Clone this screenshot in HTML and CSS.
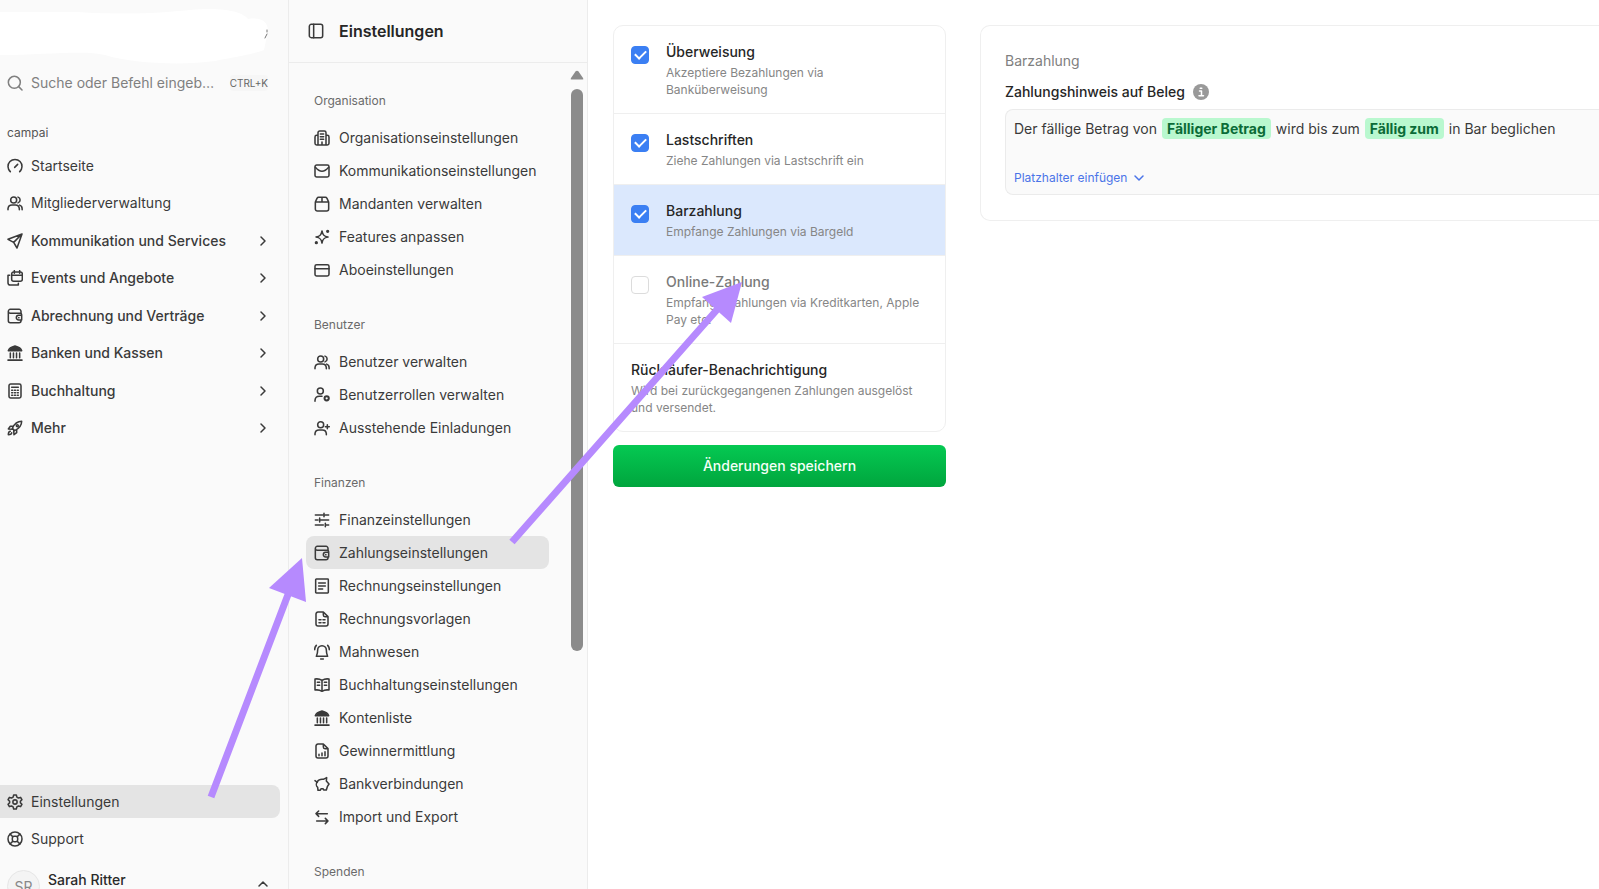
FILE: index.html
```html
<!DOCTYPE html>
<html lang="de">
<head>
<meta charset="utf-8">
<title>Zahlungseinstellungen</title>
<link rel="stylesheet" href="styles.css">
</head>
<body>
<svg class="sprite" aria-hidden="true">
  <symbol id="search" viewBox="0 0 24 24"><circle cx="11" cy="11" r="9"/><path d="M17.500 17.500L22.500 22.500"/></symbol>
  <symbol id="gauge" viewBox="0 0 24 24"><path d="M5 20.500a10.500 10.500 0 1 1 14 0M5 20.500L3.500 19M19 20.500l1.500-1.500M11.500 14L16 9.500"/></symbol>
  <symbol id="users" viewBox="0 0 24 24"><circle cx="10" cy="7.500" r="4.500"/><path d="M1.500 22v-1.500a6 6 0 0 1 6-5.500h5a6 6 0 0 1 6 5.500V22M16.500 3.200a4.500 4.500 0 0 1 0 8.600M19 15.200c2.300.8 3.700 2.800 3.700 5.300V22"/></symbol>
  <symbol id="send" viewBox="0 0 24 24"><path d="M22.500 1.500L1.500 9.500l8.500 4.500 5 8.500zM22.500 1.500L10 14"/></symbol>
  <symbol id="events" viewBox="0 0 24 24"><rect x="7" y="3" width="16" height="14" rx="3"/><path d="M7 8h16M11 1v4M19 1v4M4 8H1.500v11a3.500 3.500 0 0 0 3.500 3.500h12V20"/></symbol>
  <symbol id="wallet" viewBox="0 0 24 24"><path d="M21 8V5a3 3 0 0 0-3-3H5a3 3 0 0 0-3 3v14a3 3 0 0 0 3 3h13a3 3 0 0 0 3-3v-1M2 5c0 2 1 3 3 3h15a2 2 0 0 1 2 2v8h-4.500a3.500 3.500 0 0 1 0-7H22M17.500 14.500h.5"/></symbol>
  <symbol id="bank" viewBox="0 0 24 24"><path d="M2 8.500C3 5 8 2.500 12 1.500c4 1 9 3.500 10 7zM5 12v7M9.700 12v7M14.300 12v7M19 12v7M1.500 22.700h21"/><path class="fill" d="M4 8c1-3 5-4.500 8-5.500 3 1 7 2.500 8 5.500z"/></symbol>
  <symbol id="calc" viewBox="0 0 24 24"><rect x="3" y="1.500" width="18" height="21" rx="2.500"/><path d="M7 6.500h10M7 11h1.500M11.200 11h1.600M15.500 11H17M7 14.700h1.500M11.200 14.700h1.600M15.500 14.700H17M7 18.400h1.500M11.200 18.400h1.600M15.500 18.400H17"/></symbol>
  <symbol id="rocket" viewBox="0 0 24 24"><path d="M8 12.500C11 6 15 2 22 2c0 7-4 11-10.500 14zM9.500 9.500H5L2 13.500l6 .5M14.500 14.500V19l-4 3-.5-6M5 17c-2 0-3 2-3 5 3 0 5-1 5-3"/><circle cx="15.500" cy="8.500" r="1.500"/></symbol>
  <symbol id="gear" viewBox="0 0 24 24"><path d="M10 1.500h4l.8 3.200 2.400 1.300 3.200-.9 2 3.400-2.300 2.300v2.400l2.300 2.300-2 3.400-3.200-.9-2.400 1.300-.8 3.200h-4l-.8-3.200L6.800 18l-3.200.9-2-3.400 2.300-2.300v-2.400L1.600 8.500l2-3.400 3.200.9 2.400-1.300z"/><circle cx="12" cy="12" r="3.200"/></symbol>
  <symbol id="support" viewBox="0 0 24 24"><circle cx="12" cy="12" r="10.500"/><rect x="8" y="8" width="8" height="8" rx="2.500"/><path d="M4.700 4.700l4 4M19.300 4.700l-4 4M4.700 19.300l4-4M19.300 19.300l-4-4"/></symbol>
  <symbol id="right" viewBox="0 0 24 24"><path d="M8 4l8 8-8 8"/></symbol>
  <symbol id="up" viewBox="0 0 24 24"><path d="M4 16l8-8 8 8"/></symbol>
  <symbol id="down" viewBox="0 0 24 24"><path d="M4 8l8 8 8-8"/></symbol>
  <symbol id="panel" viewBox="0 0 24 24"><rect x="2" y="2" width="20" height="20" rx="3"/><path d="M8.500 2v20"/></symbol>
  <symbol id="building" viewBox="0 0 24 24"><path d="M6 22.500V4a2.500 2.500 0 0 1 2.500-2.500h7A2.500 2.500 0 0 1 18 4v18.500zM6 8H4a2.500 2.500 0 0 0-2.500 2.500V20A2.500 2.500 0 0 0 4 22.500h16a2.500 2.500 0 0 0 2.500-2.500v-9.500A2.500 2.500 0 0 0 20 8h-2M9.500 6h5M9.500 10h5M9.500 14h5M12 18v4"/></symbol>
  <symbol id="mail" viewBox="0 0 24 24"><rect x="1.500" y="3" width="21" height="18" rx="2.500"/><path d="M2 6.500c3 3.500 7 6 10 6s7-2.500 10-6"/></symbol>
  <symbol id="box" viewBox="0 0 24 24"><path d="M2 9h20v10.500a3 3 0 0 1-3 3H5a3 3 0 0 1-3-3zM2 9l2.500-5.500A3 3 0 0 1 7 2h10a3 3 0 0 1 2.500 1.500L22 9M12 2v7"/></symbol>
  <symbol id="sparkle" viewBox="0 0 24 24"><path d="M12 3c1 6 3 8 9 9-6 1-8 3-9 9-1-6-3-8-9-9 6-1 8-3 9-9z"/><circle class="fill" cx="20.500" cy="3.500" r="1.300"/><circle class="fill" cx="3.500" cy="20.500" r="1.300"/></symbol>
  <symbol id="card" viewBox="0 0 24 24"><rect x="1.500" y="4" width="21" height="17" rx="2.500"/><path d="M1.500 10h21"/></symbol>
  <symbol id="userdot" viewBox="0 0 24 24"><circle cx="9.500" cy="6" r="4.500"/><path d="M1.500 21.500V20a6.500 6.500 0 0 1 6.500-6h4"/><circle class="bold" cx="19" cy="17" r="3.200"/></symbol>
  <symbol id="userplus" viewBox="0 0 24 24"><circle cx="10" cy="7" r="4.500"/><path d="M1.500 22v-1.500a6 6 0 0 1 6-5.500h5a6 6 0 0 1 6 5.500V22M20 7v6M17 10h6"/></symbol>
  <symbol id="sliders" viewBox="0 0 24 24"><path d="M2 4.500h11M17 4.500h5M15 2v5M2 12h4M9 12h13M8.500 9v6M2 19.500h12M18 19.500h4M17 17v5"/></symbol>
  <symbol id="invoice" viewBox="0 0 24 24"><rect x="2.500" y="1.500" width="19" height="21" rx="1"/><path d="M7 7.500h10M7 12h10M7 16.500h6"/></symbol>
  <symbol id="doc" viewBox="0 0 24 24"><path d="M14 1.500H6a3 3 0 0 0-3 3v15a3 3 0 0 0 3 3h12a3 3 0 0 0 3-3v-11zM14 1.500V6a2.500 2.500 0 0 0 2.500 2.500H21M7.500 13h3M13.500 13h3M7.500 17.500h3M13.500 17.500h3"/></symbol>
  <symbol id="bell" viewBox="0 0 24 24"><path d="M12 2.500c-4 0-6.500 3-6.500 6.500 0 5-1 7-2 9.500h17c-1-2.500-2-4.500-2-9.500 0-3.500-2.500-6.500-6.500-6.500zM10 22.500h4M3.500 2C2 3.500 1 6 1 8.500M20.500 2C22 3.500 23 6 23 8.500"/></symbol>
  <symbol id="book" viewBox="0 0 24 24"><path d="M12 5C9 3 5 2.500 1.500 3v16.500c3.500-.5 7.500 0 10.500 2 3-2 7-2.500 10.500-2V3C19 2.500 15 3 12 5zM12 5v16.500M5 8h3.500M5 12.500h3.500M15.500 8H19M15.500 12.500H19"/></symbol>
  <symbol id="report" viewBox="0 0 24 24"><path d="M14 1.500H6a3 3 0 0 0-3 3v15a3 3 0 0 0 3 3h12a3 3 0 0 0 3-3v-11zM14 1.500V6a2.500 2.500 0 0 0 2.500 2.500H21M7.500 19v-2M12 19v-4M16.500 19v-6"/></symbol>
  <symbol id="piggy" viewBox="0 0 24 24"><path d="M5 8.500C6.500 6 9 5 12 5h2l5-2.500-.5 5L22.500 12l-2.500 4-1.500 5h-4l-1-2h-3l-1 2.500H6L5.500 17C3 15 3 11 5 8.500zM5 9.500L1.500 7"/></symbol>
  <symbol id="swap" viewBox="0 0 24 24"><path d="M20 7H3M7 3L3 7l4 4M4 18h17M17 14l4 4-4 4"/></symbol>
</svg>

<div class="app">
  <aside class="sidebar">
    <div class="brand">
      <svg class="brand-mask" viewBox="0 0 289 66" aria-hidden="true">
        <path d="M0 12H75C130 15 160 13 190 10C225 7 242 12 248 19C262 17 268 22 268 31L264 50C250 55 235 57 215 61C180 66 130 63 105 55C85 50 45 55 0 55Z"/>
        <path class="brand-mark" d="M267 30v2M267 34l-2 4"/>
      </svg>
    </div>
    <button class="search" type="button"><svg class="icon"><use href="#search"/></svg><span class="search-text">Suche oder Befehl eingeb…</span><kbd>CTRL+K</kbd></button>
    <h2 class="nav-label">campai</h2>
    <nav class="nav">
      <a href="#"><svg class="icon"><use href="#gauge"/></svg>Startseite</a>
      <a href="#"><svg class="icon"><use href="#users"/></svg>Mitgliederverwaltung</a>
      <button type="button"><svg class="icon"><use href="#send"/></svg>Kommunikation und Services<svg class="chevron"><use href="#right"/></svg></button>
      <button type="button"><svg class="icon"><use href="#events"/></svg>Events und Angebote<svg class="chevron"><use href="#right"/></svg></button>
      <button type="button"><svg class="icon"><use href="#wallet"/></svg>Abrechnung und Verträge<svg class="chevron"><use href="#right"/></svg></button>
      <button type="button"><svg class="icon"><use href="#bank"/></svg>Banken und Kassen<svg class="chevron"><use href="#right"/></svg></button>
      <button type="button"><svg class="icon"><use href="#calc"/></svg>Buchhaltung<svg class="chevron"><use href="#right"/></svg></button>
      <button type="button"><svg class="icon"><use href="#rocket"/></svg>Mehr<svg class="chevron"><use href="#right"/></svg></button>
    </nav>
    <div class="sidebar-foot">
      <a class="foot-link active" href="#"><svg class="icon"><use href="#gear"/></svg>Einstellungen</a>
      <a class="foot-link" href="#"><svg class="icon"><use href="#support"/></svg>Support</a>
      <button class="account" type="button"><span class="avatar">SR</span><span class="account-name">Sarah Ritter</span><svg class="chevron"><use href="#up"/></svg></button>
    </div>
  </aside>

  <section class="settings">
    <header class="settings-head"><svg class="icon"><use href="#panel"/></svg><h1>Einstellungen</h1></header>
    <div class="settings-body">
      <nav class="groups">
        <section class="group">
          <h2>Organisation</h2>
          <a href="#"><svg class="icon"><use href="#building"/></svg>Organisationseinstellungen</a>
          <a href="#"><svg class="icon"><use href="#mail"/></svg>Kommunikationseinstellungen</a>
          <a href="#"><svg class="icon"><use href="#box"/></svg>Mandanten verwalten</a>
          <a href="#"><svg class="icon"><use href="#sparkle"/></svg>Features anpassen</a>
          <a href="#"><svg class="icon"><use href="#card"/></svg>Aboeinstellungen</a>
        </section>
        <section class="group">
          <h2>Benutzer</h2>
          <a href="#"><svg class="icon"><use href="#users"/></svg>Benutzer verwalten</a>
          <a href="#"><svg class="icon"><use href="#userdot"/></svg>Benutzerrollen verwalten</a>
          <a href="#"><svg class="icon"><use href="#userplus"/></svg>Ausstehende Einladungen</a>
        </section>
        <section class="group">
          <h2>Finanzen</h2>
          <a href="#"><svg class="icon"><use href="#sliders"/></svg>Finanzeinstellungen</a>
          <a class="active" href="#"><svg class="icon"><use href="#wallet"/></svg>Zahlungseinstellungen</a>
          <a href="#"><svg class="icon"><use href="#invoice"/></svg>Rechnungseinstellungen</a>
          <a href="#"><svg class="icon"><use href="#doc"/></svg>Rechnungsvorlagen</a>
          <a href="#"><svg class="icon"><use href="#bell"/></svg>Mahnwesen</a>
          <a href="#"><svg class="icon"><use href="#book"/></svg>Buchhaltungseinstellungen</a>
          <a href="#"><svg class="icon"><use href="#bank"/></svg>Kontenliste</a>
          <a href="#"><svg class="icon"><use href="#report"/></svg>Gewinnermittlung</a>
          <a href="#"><svg class="icon"><use href="#piggy"/></svg>Bankverbindungen</a>
          <a href="#"><svg class="icon"><use href="#swap"/></svg>Import und Export</a>
        </section>
        <section class="group"><h2>Spenden</h2></section>
      </nav>
      <div class="scrollbar" aria-hidden="true">
        <svg class="scroll-up" viewBox="0 0 14 10"><path d="M1.500 9.500Q0 9.500 1 8L5.500 1.500Q7 0 8.500 1.500L13 8Q14 9.500 12.500 9.500Z"/></svg>
        <div class="thumb"></div>
      </div>
    </div>
  </section>

  <main class="content">
    <form class="methods">
      <div class="card">
        <label class="method"><input type="checkbox" checked><span><strong>Überweisung</strong><small>Akzeptiere Bezahlungen via<br>Banküberweisung</small></span></label>
        <label class="method"><input type="checkbox" checked><span><strong>Lastschriften</strong><small>Ziehe Zahlungen via Lastschrift ein</small></span></label>
        <label class="method selected"><input type="checkbox" checked><span><strong>Barzahlung</strong><small>Empfange Zahlungen via Bargeld</small></span></label>
        <label class="method off"><input type="checkbox"><span><strong>Online-Zahlung</strong><small>Empfange Zahlungen via Kreditkarten, Apple Pay etc.</small></span></label>
        <div class="method"><span><strong>Rückläufer-Benachrichtigung</strong><small>Wird bei zurückgegangenen Zahlungen ausgelöst und versendet.</small></span></div>
      </div>
      <button class="save" type="button">Änderungen speichern</button>
    </form>
    <section class="card detail">
      <h2>Barzahlung</h2>
      <div class="field-label"><span id="hint-label">Zahlungshinweis auf Beleg</span><svg class="info" viewBox="0 0 16 16" aria-hidden="true"><circle cx="8" cy="8" r="8"/><path d="M6.500 7H8.500V11.500M6 11.800H10.500M7.200 4.200H8.800"/></svg></div>
      <div class="editor">
        <div class="editor-text" role="textbox" aria-labelledby="hint-label" contenteditable="true">Der fällige Betrag von <mark>Fälliger Betrag</mark> wird bis zum <mark>Fällig zum</mark> in Bar beglichen</div>
        <button class="insert" type="button">Platzhalter einfügen<svg class="chevron"><use href="#down"/></svg></button>
      </div>
    </section>
  </main>
</div>

<svg class="annotations" width="760" height="820" viewBox="0 0 760 820" aria-hidden="true">
  <path d="M211 797L289 592M512 542L722 304"/>
  <polygon points="302,558 269,588 306,602"/>
  <polygon points="742,282 702,297 731,323"/>
</svg>
</body>
</html>
```
FILE: styles.css
```css
* { box-sizing: border-box; }
body { margin: 0; font: 14px/20px Inter, "Liberation Sans", sans-serif; color: #3a3a3a; background: #fff; }
h1, h2 { margin: 0; font-weight: 400; }
a { color: inherit; text-decoration: none; }
button { font: inherit; color: inherit; background: none; border: 0; padding: 0; text-align: left; }
.sprite { position: absolute; width: 0; height: 0; }
svg { flex: none; fill: none; stroke: currentColor; stroke-width: 2; stroke-linecap: round; stroke-linejoin: round; }
.fill { fill: currentColor; }
.bold { stroke-width: 3; }
.icon { width: 16px; height: 16px; stroke-width: 2.3; }
.chevron { width: 12px; height: 12px; margin-left: auto; stroke-width: 3; }

.app { display: grid; grid-template-columns: 289px 299px 1fr; height: 100vh; overflow: hidden; }
.sidebar { display: flex; flex-direction: column; min-height: 0; overflow: hidden; background: #fafafa; border-right: 1px solid #ececec; }
.brand { height: 66px; flex: none; }
.brand-mask { display: block; width: 289px; height: 66px; fill: #fff; stroke: none; }
.brand-mark { stroke: #777; stroke-width: 1; }
.search { display: flex; align-items: center; gap: 8px; height: 34px; padding: 0 20px 0 7px; color: #808080; }
.search-text { flex: 1; white-space: nowrap; }
kbd { font: 10px/16px Inter, sans-serif; color: #666; background: #f6f6f6; border-radius: 4px; }
.nav-label { margin: 23px 0 4px 7px; font-size: 12px; color: #555; }
.nav { display: grid; grid-auto-rows: 1fr; min-height: 300px; }
.nav a, .nav button { display: flex; align-items: center; gap: 8px; width: 100%; padding: 0 19px 0 7px; }
.nav button { font-weight: 500; }
.sidebar-foot { margin-top: auto; height: 104px; flex: none; }
.foot-link { display: flex; align-items: center; gap: 8px; height: 33px; margin: 0 8px 4px 0; padding-left: 7px; border-radius: 0 8px 8px 0; }
.active { background: #e4e4e4; }
.account { display: flex; align-items: flex-start; width: 100%; height: 60px; padding: 11px 19px 0 7px; }
.avatar { width: 33px; height: 33px; border: 1px solid #e6e6e6; border-radius: 50%; background: #f4f4f4; color: #888; line-height: 31px; text-align: center; }
.account-name { margin-left: 8px; font-weight: 500; color: #2a2a2a; }
.account .chevron { margin-top: 8px; }

.settings { display: flex; flex-direction: column; min-height: 0; background: #fafafa; border-right: 1px solid #ececec; }
.settings-head { display: flex; align-items: center; gap: 15px; height: 63px; flex: none; padding-left: 19px; border-bottom: 1px solid #ececec; }
.settings-head h1 { font-size: 16px; font-weight: 600; color: #262626; }
.settings-body { display: flex; justify-content: space-between; min-height: 0; overflow: hidden; }
.groups { display: flex; flex-direction: column; gap: 29px; width: 243px; margin-left: 17px; padding-top: 28px; }
.group h2 { margin: 0 0 10px 8px; font-size: 12px; color: #6a6a6a; }
.group a { display: flex; align-items: center; gap: 9px; height: 33px; padding-left: 8px; border-radius: 8px; }
.scrollbar { display: flex; flex-direction: column; align-items: center; gap: 9px; width: 14px; margin-right: 3px; padding-top: 7px; }
.scroll-up { width: 14px; height: 10px; fill: #8b8b8b; stroke: none; }
.thumb { width: 12px; height: 562px; flex: none; border-radius: 6px; background: #8b8b8b; }

.content { display: grid; grid-template-columns: 333px 1fr; gap: 34px; align-items: start; padding: 25px 0 0 25px; }
.methods { display: flex; flex-direction: column; gap: 13px; }
.card { border: 1px solid #efefef; border-radius: 10px; overflow: hidden; background: #fff; }
.method { display: flex; gap: 17px; padding: 16px 20px 15px 17px; }
.method + .method { border-top: 1px solid #efefef; }
.method strong, .method small { display: block; }
.method strong { margin-bottom: 2px; font-weight: 500; color: #262626; }
.method small { font-size: 12px; line-height: 17px; color: #868686; }
.method.off strong { color: #7a7a7a; }
.method.selected { background: #dbe8fd; }
.method input { appearance: none; flex: none; width: 18px; height: 18px; margin: 4px 0 0; border: 1px solid #dcdcdc; border-radius: 4px; background: #fff; }
.method input:checked { display: grid; place-items: center; border-color: #3b7ff3; background: #3b7ff3; }
.method input:checked::before { content: ""; width: 9px; height: 5px; margin-bottom: 3px; border: solid #fff; border-width: 0 0 2px 2px; transform: rotate(-45deg); }
.save { height: 42px; border-radius: 6px; background: linear-gradient(#05c952, #00a53d); color: #f4fff7; font-weight: 500; text-align: center; }

.detail { padding: 25px 0 25px 24px; border-right: 0; border-radius: 10px 0 0 10px; }
.detail h2 { margin-bottom: 11px; font-size: 14px; color: #808080; }
.field-label { display: flex; align-items: center; gap: 8px; margin-bottom: 7px; font-weight: 500; color: #262626; }
.info { width: 16px; height: 16px; fill: #999; stroke: none; }
.info path { fill: none; stroke: #fff; stroke-width: 1.5; }
.editor { padding: 8px; border: 1px solid #ebebeb; border-right: 0; border-radius: 8px 0 0 8px; background: #fafafa; }
.editor-text { min-height: 52px; line-height: 22px; outline: 0; white-space: nowrap; }
mark { padding: 2px 5px; margin: 0 1px; border-radius: 4px; background: #b9f8cf; color: #0b6b37; font-weight: 700; }
.insert { display: flex; align-items: center; gap: 6px; height: 16px; font-size: 12px; color: #4a74e8; }

.annotations { position: absolute; top: 0; left: 0; fill: #b68afe; stroke: none; pointer-events: none; }
.annotations path { fill: none; stroke: #b68afe; stroke-width: 7; stroke-linecap: butt; }
```
